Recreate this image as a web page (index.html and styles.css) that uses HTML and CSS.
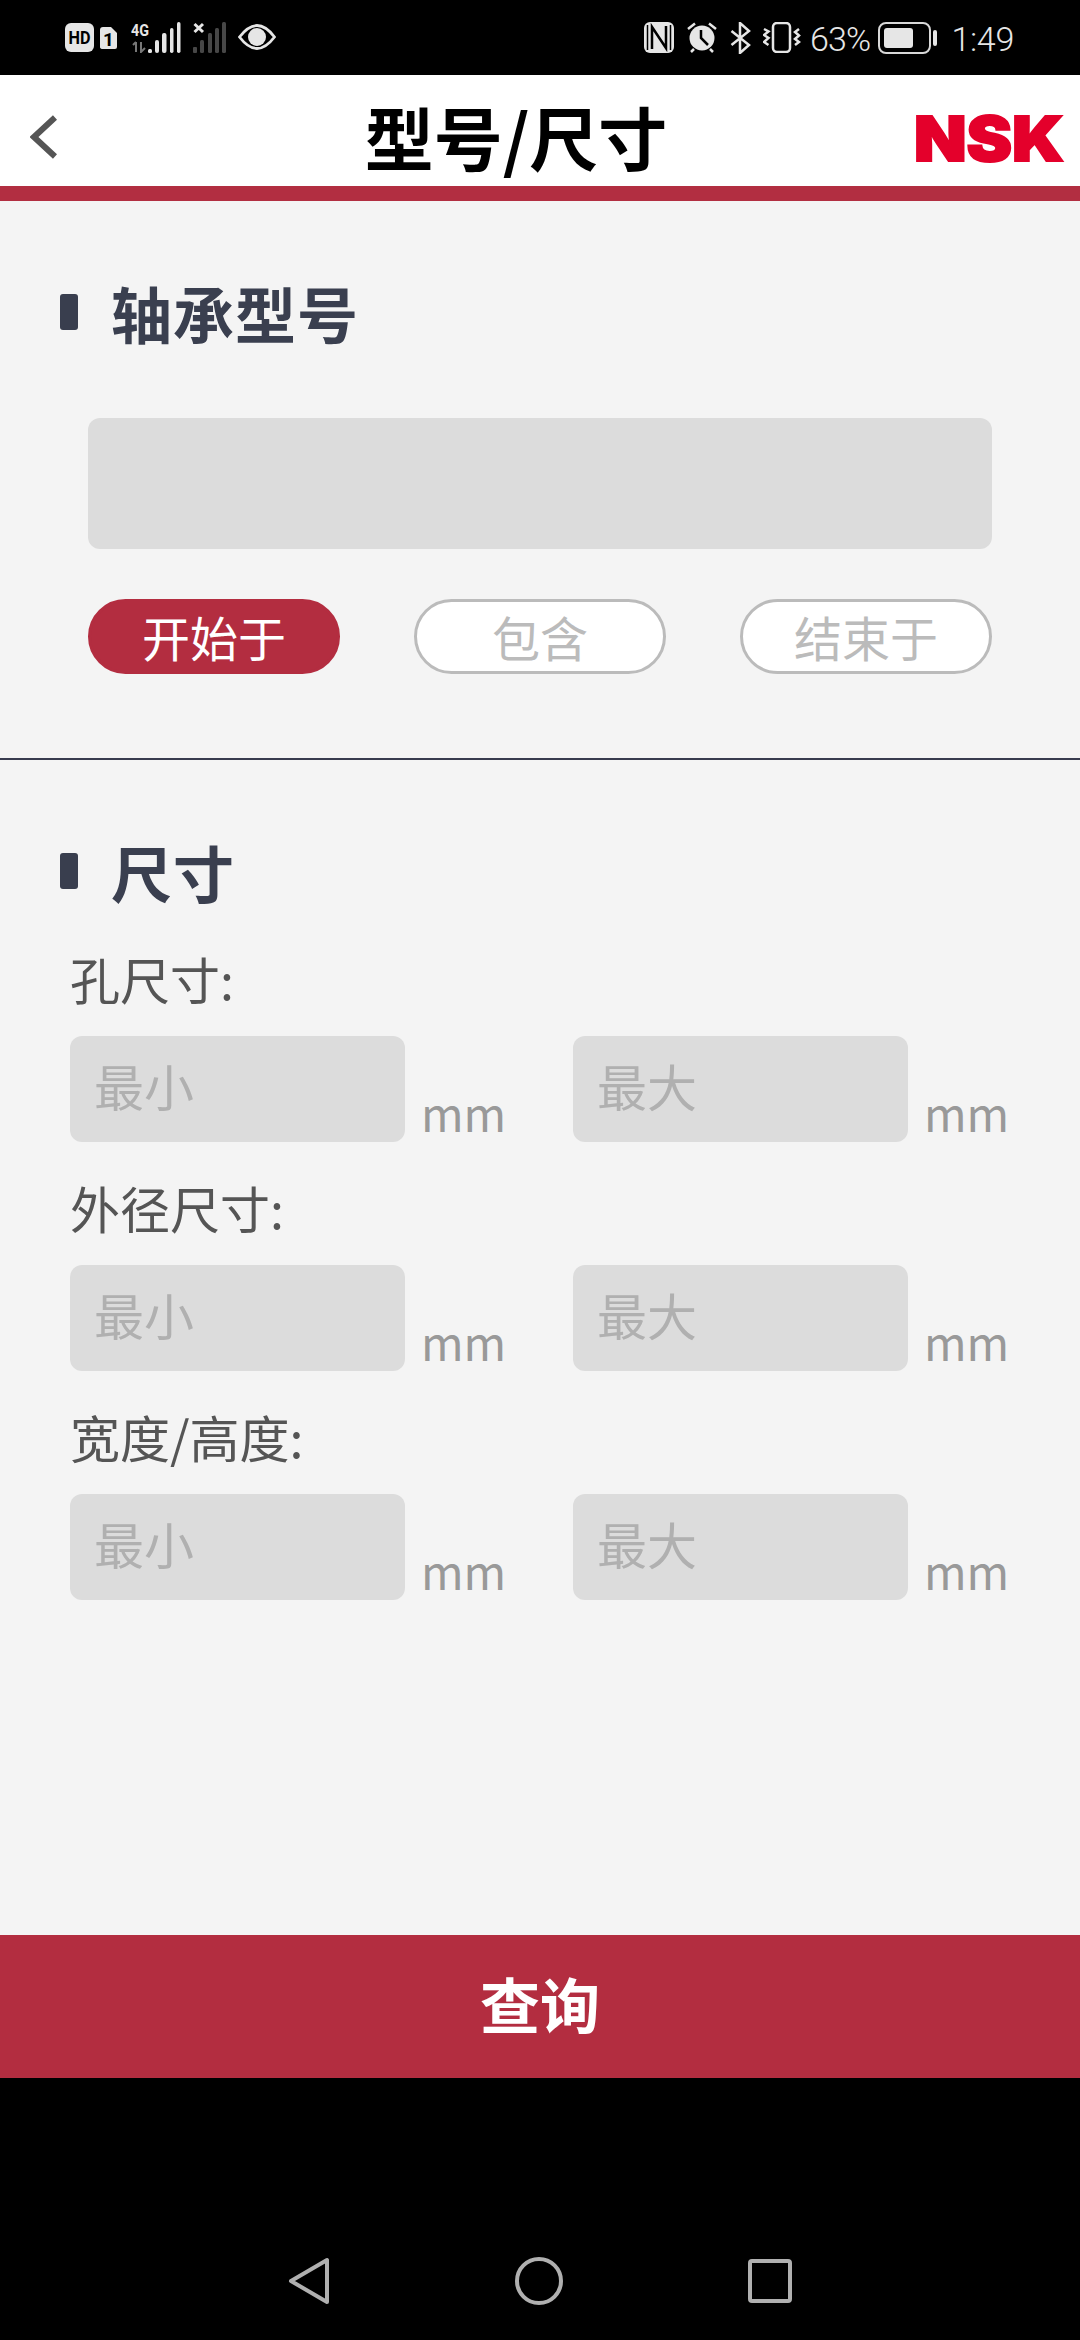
FILE: index.html
```html
<!DOCTYPE html>
<html lang="zh-CN">
<head>
<meta charset="utf-8">
<title>型号/尺寸</title>
<link rel="stylesheet" href="styles.css">
</head>
<body>
<div class="status">
  <div class="status-left">
    <svg class="ic" width="29" height="30" viewBox="0 0 29 30"><rect y="1" width="29" height="29" rx="6" fill="#e6e6e6"/><text x="3.500" y="22" textLength="22" lengthAdjust="spacingAndGlyphs" class="hd">HD</text></svg>
    <svg class="ic" width="17" height="30" viewBox="0 0 17 30"><path d="M3 5H11L17 11V25Q17 27 15 27H3Q0 27 0 25V8Q0 5 3 5Z" fill="#e6e6e6"/><text x="8.500" y="24" text-anchor="middle" class="sim">1</text></svg>
    <svg class="ic net" width="50" height="31" viewBox="0 0 50 31"><text x="0" y="13.500" textLength="18" lengthAdjust="spacingAndGlyphs" class="g4">4G</text><path d="M5 20V30M2 23L5 20M10 20V30L14 26" fill="none" stroke="#777" stroke-width="2"/><g fill="#e6e6e6"><rect x="17" y="27" width="4" height="4" rx="1.500"/><rect x="24" y="18" width="4" height="13" rx="2"/><rect x="31" y="11" width="4.500" height="20" rx="2"/><rect x="39" y="6" width="3.500" height="25" rx="1.700"/><rect x="46" y="0" width="3.500" height="31" rx="1.700"/></g></svg>
    <svg class="ic sig2" width="33" height="31" viewBox="0 0 33 31"><path d="M1.500 2L10 10M10 2L1.500 10" stroke="#e6e6e6" stroke-width="3"/><g fill="#474747"><rect x="0" y="25" width="4" height="6" rx="1"/><rect x="7" y="18" width="4" height="13" rx="1.500"/><rect x="15" y="11" width="4" height="20" rx="1.500"/><rect x="22" y="6" width="4" height="25" rx="1.500"/><rect x="29" y="0" width="4" height="31" rx="1.500"/></g></svg>
    <svg class="ic eye" width="38" height="30" viewBox="0 0 38 30"><path d="M1.500 15Q19 -8 36.500 15Q19 38 1.500 15Z" fill="none" stroke="#e6e6e6" stroke-width="2.800"/><circle cx="19" cy="15" r="9" fill="#e6e6e6"/><path d="M20 6A6 6 0 0 1 14 14A6 6 0 0 0 20 6Z" fill="#000" transform="rotate(180 19 11)"/></svg>
  </div>
  <div class="status-right">
    <svg class="ic" width="30" height="31" viewBox="0 0 30 31"><rect width="30" height="31" rx="6" fill="#e6e6e6"/><path d="M3.500 3V28M26.500 3V28" stroke="#000" stroke-width="1.500"/><path d="M8 27V5L22 26V4" fill="none" stroke="#000" stroke-width="2.500"/></svg>
    <svg class="ic alarm" width="32" height="31" viewBox="0 0 32 31"><circle cx="16" cy="16" r="12.500" fill="#e6e6e6"/><path d="M15 8V16L22 23" fill="none" stroke="#000" stroke-width="2.500"/><path d="M2 7L9 1.500M30 7L23 1.500M5 30L8 27M27 30L24 27" stroke="#e6e6e6" stroke-width="2.500" fill="none"/></svg>
    <svg class="ic bt" width="21" height="32" viewBox="0 0 21 32"><path d="M1.500 9L19 23L10 31V1L19 9L1.500 23" fill="none" stroke="#e6e6e6" stroke-width="2.500"/></svg>
    <svg class="ic vib" width="38" height="31" viewBox="0 0 38 31"><rect x="10" y="1" width="17" height="29" rx="4" fill="none" stroke="#e6e6e6" stroke-width="2.500"/><path d="M1 7L5.500 9.500L1 13L5.500 16L1 20L5.500 23" fill="none" stroke="#e6e6e6" stroke-width="2.500"/><path d="M36 7L32 10L36 13.500L32 17L36 20L32 23" fill="none" stroke="#e6e6e6" stroke-width="2.500"/></svg>
    <span class="pct">63%</span>
    <svg class="ic batt" width="60" height="32" viewBox="0 0 60 32"><rect x="1" y="1" width="51" height="30" rx="7" fill="none" stroke="#d8d8d8" stroke-width="2"/><rect x="6" y="6" width="29" height="20" rx="3" fill="#e6e6e6"/><rect x="55" y="8" width="4" height="16" rx="2" fill="#e6e6e6"/></svg>
    <span class="time">1:49</span>
  </div>
</div>

<header class="head">
  <svg class="back" width="27" height="44" viewBox="0 0 27 44"><path d="M25 2.500L4 22L25 41.500" fill="none" stroke="#555" stroke-width="6"/></svg>
  <h1 class="head-title">型号/尺寸</h1>
  <svg class="logo" width="150" height="80" viewBox="0 0 150 80"><text x="0" y="65.500" textLength="150" lengthAdjust="spacingAndGlyphs" class="logo-text">NSK</text></svg>
</header>

<main class="main">
  <section class="model">
    <div class="sec-title"><i class="bullet"></i><h2>轴承型号</h2></div>
    <input class="model-input" type="text">
    <div class="pills">
      <button class="pill on">开始于</button>
      <button class="pill">包含</button>
      <button class="pill">结束于</button>
    </div>
  </section>
  <section class="size">
    <div class="sec-title"><i class="bullet"></i><h2>尺寸</h2></div>
    <div class="fields">
      <div class="field">
        <div class="label">孔尺寸:</div>
        <div class="range">
          <div class="pair"><input class="num" placeholder="最小"><span class="unit">mm</span></div>
          <div class="pair"><input class="num" placeholder="最大"><span class="unit">mm</span></div>
        </div>
      </div>
      <div class="field">
        <div class="label">外径尺寸:</div>
        <div class="range">
          <div class="pair"><input class="num" placeholder="最小"><span class="unit">mm</span></div>
          <div class="pair"><input class="num" placeholder="最大"><span class="unit">mm</span></div>
        </div>
      </div>
      <div class="field">
        <div class="label">宽度/高度:</div>
        <div class="range">
          <div class="pair"><input class="num" placeholder="最小"><span class="unit">mm</span></div>
          <div class="pair"><input class="num" placeholder="最大"><span class="unit">mm</span></div>
        </div>
      </div>
    </div>
  </section>
</main>

<button class="query">查询</button>

<nav class="sysnav">
  <svg width="42" height="48" viewBox="0 0 42 48"><path d="M39 3V45L3 24Z" fill="none" stroke="#b0b0b0" stroke-width="4" stroke-linejoin="round"/></svg>
  <svg width="48" height="48" viewBox="0 0 48 48"><circle cx="24" cy="24" r="22" fill="none" stroke="#b0b0b0" stroke-width="4"/></svg>
  <svg width="44" height="44" viewBox="0 0 44 44"><rect x="2" y="2" width="40" height="40" rx="2" fill="none" stroke="#b0b0b0" stroke-width="4"/></svg>
</nav>
</body>
</html>
```

FILE: styles.css
```css
* { box-sizing: border-box; }
html, body { margin: 0; padding: 0; }
body {
  width: 1080px;
  height: 2340px;
  display: flex;
  flex-direction: column;
  background: #000;
  font-family: "Noto Sans CJK SC", "Noto Sans", sans-serif;
}
.status {
  height: 75px;
  flex: none;
  background: #000;
  color: #e6e6e6;
  display: flex;
  justify-content: space-between;
  padding: 22px 66px 0 65px;
}
.status-left, .status-right { display: flex; align-items: flex-start; }
.ic { display: block; flex: none; }
.status-left { gap: 6px; }
.status-left .net { margin-left: 8px; }
.status-left .sig2 { margin-left: 6px; }
.status-left .eye { margin-left: 6px; }
.status-right { gap: 12px; }
.hd { font: 700 18px "Roboto", sans-serif; fill: #000; }
.sim { font: 700 19px "Roboto", sans-serif; fill: #000; }
.g4 { font: 700 16px "Roboto", sans-serif; fill: #e6e6e6; }
.pct, .time {
  font: 300 34px/32px "Roboto", sans-serif;
  color: #e6e6e6;
  margin-top: 1px;
}
.pct { margin-left: -3px; letter-spacing: -0.8px; }
.batt { margin-left: -4px; }
.time { margin-left: 1px; letter-spacing: -0.3px; }

.head {
  height: 126px;
  flex: none;
  background: #fff;
  border-bottom: 15px solid #b22e41;
  display: flex;
  align-items: flex-start;
  justify-content: space-between;
  padding: 40px 16px 0 30px;
}
.back { display: block; }
.head-title {
  margin: -27px 0 0 61px;
  padding: 0 4px;
  white-space: nowrap;
  font-size: 69px;
  line-height: 96px;
  font-weight: 700;
  color: #000;
}
.logo { display: block; margin-top: -20px; overflow: visible; }
.logo-text {
  font-family: "Inter", sans-serif;
  font-weight: 900;
  font-size: 62px;
  fill: #e4002b;
  stroke: #e4002b;
  stroke-width: 2;
}

.main { flex: 1; background: #f4f4f4; display: flex; flex-direction: column; }
.model { height: 559px; border-bottom: 2px solid #383b4e; padding-top: 85px; flex: none; }
.sec-title {
  display: flex;
  align-items: flex-start;
  height: 60px;
  padding-left: 60px;
}
.bullet {
  display: block;
  width: 18px;
  height: 36px;
  margin-top: 8px;
  border-radius: 3px;
  background: #393e4e;
}
.sec-title h2 {
  margin: -3px 0 0 33px;
  font-size: 61px;
  line-height: 60px;
  font-weight: 700;
  color: #3a3f4f;
  letter-spacing: 1px;
}
.model-input {
  display: block;
  width: 904px;
  height: 131px;
  margin: 72px 0 50px 88px;
  border: 0;
  border-radius: 12px;
  background: #dcdcdc;
}
.pills {
  display: flex;
  justify-content: space-between;
  width: 904px;
  margin-left: 88px;
}
.pill {
  width: 252px;
  height: 75px;
  padding: 0 0 2px;
  border: 3px solid #bbb;
  border-radius: 38px;
  background: #fff;
  color: #bbb;
  font-family: inherit;
  font-size: 48px;
  line-height: 66px;
}
.pill.on { background: #b32d40; border-color: #b32d40; color: #fff; }

.size { padding-top: 85px; }
.fields {
  display: flex;
  flex-direction: column;
  gap: 35px;
  margin-top: 43px;
  padding-left: 70px;
}
.label { font-size: 50px; line-height: 60px; color: #555; }
.range {
  display: grid;
  grid-template-columns: 503px 1fr;
  margin-top: 28px;
}
.pair { display: flex; align-items: flex-end; gap: 16px; }
.num {
  width: 335px;
  height: 106px;
  padding: 0 0 8px 24px;
  border: 0;
  border-radius: 12px;
  background: #dcdcdc;
  font-family: inherit;
  font-size: 50px;
}
.num::placeholder { color: #b0b0b0; opacity: 1; }
.unit { font-size: 46px; line-height: 60px; color: #999; }

.query {
  height: 143px;
  flex: none;
  border: 0;
  padding: 0 0 8px;
  background: #b32d40;
  color: #fff;
  font-family: inherit;
  font-size: 60px;
  font-weight: 700;
}
.sysnav {
  height: 262px;
  flex: none;
  background: #000;
  display: flex;
  justify-content: center;
  align-items: center;
  gap: 185px;
  padding-top: 144px;
}
```
